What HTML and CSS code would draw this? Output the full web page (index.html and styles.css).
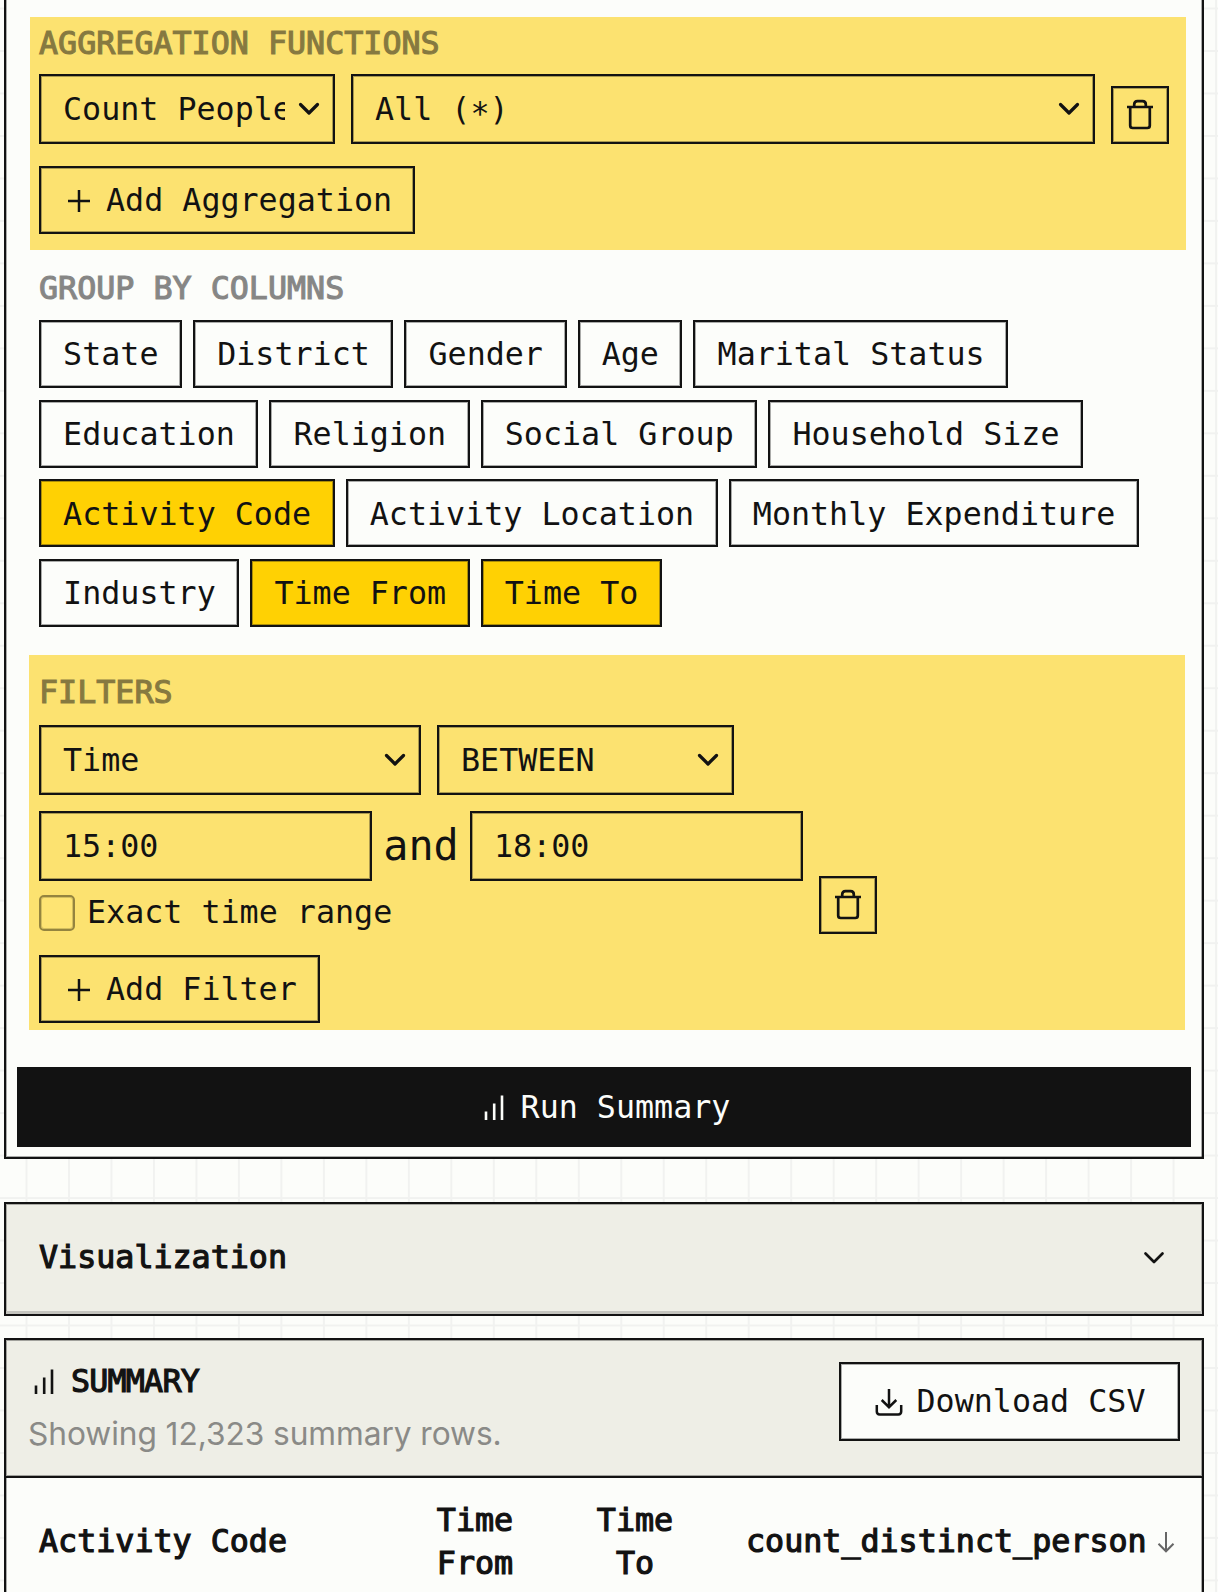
FILE: index.html
```html
<!DOCTYPE html>
<html lang="en">
<head>
<meta charset="utf-8">
<title>Summary builder</title>
<link rel="stylesheet" href="styles.css">
</head>
<body>
<svg class="defs" width="0" height="0">
  <symbol id="chevron" viewBox="0 0 22 14"><path d="M2.5 2.5 11 11 19.5 2.5"/></symbol>
  <symbol id="trash" viewBox="0 0 28 32"><path d="M1 8H27M4.2 8V26.5Q4.2 29 6.7 29H21.3Q23.8 29 23.8 26.5V8M8.2 8V5.5Q8.2 2.2 11.5 2.2H16.5Q19.8 2.2 19.8 5.5V8"/></symbol>
  <symbol id="plus" viewBox="0 0 22 22"><path d="M0 11H22M11 0V22"/></symbol>
  <symbol id="bars" viewBox="0 0 20 25"><path d="M2 16.5V25M10.2 8.5V25M18 .5V25"/></symbol>
  <symbol id="download" viewBox="0 0 28 28"><path d="M14 1V19M6.7 12 14 19.2 21.3 12M1.8 17V23.5Q1.8 26.4 4.7 26.4H23.3Q26.2 26.4 26.2 23.5V17"/></symbol>
  <symbol id="arrow" viewBox="0 0 18 22"><path d="M9 1V20M1.5 12.8 9 20.3 16.5 12.8"/></symbol>
</svg>

<main class="page">
  <section class="card builder">
    <div class="group aggregation">
      <h2 class="label">AGGREGATION FUNCTIONS</h2>
      <div class="row">
        <div class="field select fn"><span class="value">Count People</span><svg class="chev"><use href="#chevron"/></svg></div>
        <div class="field select target"><span class="value">All (<span class="star">*</span>)</span><svg class="chev"><use href="#chevron"/></svg></div>
        <button class="remove" aria-label="Remove"><svg><use href="#trash"/></svg></button>
      </div>
      <button class="add"><svg><use href="#plus"/></svg>Add Aggregation</button>
    </div>

    <div class="columns">
      <h2 class="label">GROUP BY COLUMNS</h2>
      <div class="chips">
        <button class="chip">State</button>
        <button class="chip">District</button>
        <button class="chip">Gender</button>
        <button class="chip">Age</button>
        <button class="chip">Marital Status</button>
        <button class="chip">Education</button>
        <button class="chip">Religion</button>
        <button class="chip">Social Group</button>
        <button class="chip">Household Size</button>
        <button class="chip on">Activity Code</button>
        <button class="chip">Activity Location</button>
        <button class="chip">Monthly Expenditure</button>
        <button class="chip">Industry</button>
        <button class="chip on">Time From</button>
        <button class="chip on">Time To</button>
      </div>
    </div>

    <div class="group filters">
      <h2 class="label">FILTERS</h2>
      <div class="row">
        <div class="field select subject"><span class="value">Time</span><svg class="chev"><use href="#chevron"/></svg></div>
        <div class="field select operator"><span class="value">BETWEEN</span><svg class="chev"><use href="#chevron"/></svg></div>
      </div>
      <div class="range">
        <div>
          <div class="times">
            <div class="field time">15:00</div>
            <span class="and">and</span>
            <div class="field time">18:00</div>
          </div>
          <label class="exact"><span class="box"></span>Exact time range</label>
        </div>
        <button class="remove" aria-label="Remove"><svg><use href="#trash"/></svg></button>
      </div>
      <button class="add"><svg><use href="#plus"/></svg>Add Filter</button>
    </div>

    <button class="run"><svg class="bars"><use href="#bars"/></svg>Run Summary</button>
  </section>

  <section class="card accordion">
    <span class="strong">Visualization</span>
    <svg class="chev"><use href="#chevron"/></svg>
  </section>

  <section class="card summary">
    <header class="summary-head">
      <div>
        <h2 class="title"><svg class="bars"><use href="#bars"/></svg>SUMMARY</h2>
        <p class="note">Showing 12,323 summary rows.</p>
      </div>
      <button class="download"><svg><use href="#download"/></svg>Download CSV</button>
    </header>
    <div class="thead strong">
      <span class="th">Activity Code</span>
      <span class="th center">Time<br>From</span>
      <span class="th center">Time<br>To</span>
      <span class="th sorted">count_distinct_person<svg><use href="#arrow"/></svg></span>
    </div>
  </section>
</main>
</body>
</html>
```
FILE: styles.css
```css
:root {
  --ink: #121212;
  --paper: #fcfdfa;
  --sand: #eeeee6;
  --soft: #fce270;
  --sun: #ffd103;
}

* { box-sizing: border-box; }

body {
  margin: 0;
  height: 1592px;
  overflow: hidden;
  color: var(--ink);
  font-family: "DejaVu Sans Mono", "Liberation Mono", monospace;
  font-size: 31.7px;
  line-height: 42.5px;
  background-color: var(--paper);
  background-image:
    linear-gradient(to right, #f1f2f0 2px, transparent 2px),
    linear-gradient(to bottom, #f1f2f0 2px, transparent 2px);
  background-size: 42.49px 42.49px;
  background-position: 25.5px 7.5px;
}

.defs { position: absolute; }

svg {
  flex: none;
  fill: none;
  stroke: currentColor;
  stroke-width: 2.5;
}

h2, p { margin: 0; font-size: inherit; font-weight: 400; }

button {
  margin: 0;
  padding: 0;
  font: inherit;
  color: inherit;
  background: none;
  border: 2px solid var(--ink);
  white-space: pre;
}

.page { padding: 0 14px 0 4px; }

.card {
  border: 2px solid var(--ink);
  box-shadow: inset 0 0 0 1px rgba(18, 18, 18, .35);
  background-color: var(--paper);
}

.builder {
  height: 1159px;
  padding-top: 17px;
  border-top: 0;
  box-shadow: inset 1px -1px rgba(18, 18, 18, .35), inset -1px 0 rgba(18, 18, 18, .35);
}

.field, .add, .remove, .chip, .download {
  box-shadow: inset 0 0 0 1px rgba(18, 18, 18, .35);
}

.label, .strong, .title { -webkit-text-stroke: 1.2px currentColor; }

.label { opacity: .5; height: 42px; }

.group { background: var(--soft); }

.aggregation {
  width: 1156px;
  height: 233px;
  margin-left: 24px;
  padding: 5px 0 0 9px;
}

.row { display: flex; align-items: flex-end; gap: 16px; }

.aggregation .row { margin-top: 10px; }

.field {
  display: flex;
  align-items: center;
  height: 70px;
  padding-left: 22px;
  border: 2px solid var(--ink);
}

.select { padding-right: 13px; gap: 13px; }
.select .value { flex: 1; overflow: hidden; white-space: nowrap; }
.star { position: relative; top: 4px; }
.chev { width: 22px; height: 14px; stroke-width: 3.2; stroke-linecap: round; stroke-linejoin: round; }

.fn { width: 296px; }
.target { width: 744px; }

.remove {
  display: flex;
  align-items: center;
  justify-content: center;
  width: 58px;
  height: 58px;
  stroke-linejoin: round;
}
.remove svg { width: 28px; height: 32px; stroke-width: 2.7; }

.add {
  display: flex;
  align-items: center;
  gap: 16px;
  height: 68px;
  padding: 1px 22px 0 27px;
}
.add svg { width: 22px; height: 22px; }
.aggregation .add { width: 376px; margin-top: 22px; }

.columns { margin: 17px 0 0 33px; }
.chips { display: flex; flex-wrap: wrap; gap: 11.7px 11px; width: 1110px; margin-top: 11px; }
.chip { height: 68px; padding: 1px 21.6px 0 22.1px; }
.chip.on { background: var(--sun); }

.filters {
  width: 1156px;
  height: 375px;
  margin: 28px 0 0 23px;
  padding: 16px 0 0 10px;
}
.filters .row { margin-top: 12px; }
.subject { width: 382px; }
.operator { width: 297px; }

.range { display: flex; align-items: flex-end; gap: 16px; margin-top: 16px; }
.times { display: flex; align-items: center; }
.time { width: 333px; }
.and { width: 98px; text-align: center; font-size: 41.8px; }
.exact { display: flex; align-items: center; gap: 12px; height: 53px; margin-top: 5px; }
.box {
  width: 36px;
  height: 36px;
  border: 2px solid #94843f;
  border-radius: 5px;
  background: #fee473;
  box-shadow: inset 0 0 0 1px rgba(148, 132, 63, .4);
}
.range .remove { margin-bottom: 5px; }
.filters .add { width: 281px; margin-top: 16px; }

.run {
  display: flex;
  align-items: center;
  justify-content: center;
  gap: 17px;
  width: 1174px;
  height: 80px;
  margin: 37px 0 0 11px;
  padding-left: 6px;
  background: var(--ink);
  color: var(--paper);
}
.bars { width: 20px; height: 25px; stroke-width: 2.6; }

.accordion {
  display: flex;
  align-items: center;
  justify-content: space-between;
  height: 114px;
  margin-top: 43px;
  padding: 0 37px 3px 33px;
  background: var(--sand);
  box-shadow: inset 0 -3px #c4c4be, inset 0 0 0 1px rgba(18, 18, 18, .3);
}
.accordion .chev { stroke-width: 2.7; }

.summary { height: 300px; margin-top: 22px; }
.summary-head {
  display: flex;
  justify-content: space-between;
  height: 138px;
  padding: 22px 22px 0;
  border-bottom: 2px solid var(--ink);
  background: var(--sand);
  box-shadow: inset 0 0 0 1px rgba(18, 18, 18, .35);
}
.title {
  display: flex;
  align-items: center;
  gap: 17px;
  height: 42px;
  margin-top: -2px;
  padding-left: 6px;
  letter-spacing: -.8px;
}
.title svg { stroke-width: 2.6; }
.note {
  margin-top: 11px;
  font-family: Inter, sans-serif;
  font-size: 31.7px;
  letter-spacing: -.07px;
  color: #8a8a87;
}
.download {
  display: flex;
  align-items: center;
  justify-content: center;
  gap: 14px;
  width: 341px;
  height: 79px;
  padding-left: 1px;
  background: var(--paper);
}
.download svg { width: 28px; height: 28px; }

.thead {
  display: grid;
  grid-template-columns: 388px 160px 158px 1fr;
  align-items: center;
  height: 127px;
  padding-left: 33px;
}
.th { white-space: nowrap; }
.center { width: 160px; text-align: center; margin-left: -32px; }
.sorted { display: flex; align-items: center; gap: 10px; margin-left: 1px; }
.sorted svg { width: 18px; height: 22px; color: #666; stroke-width: 2; }
```
